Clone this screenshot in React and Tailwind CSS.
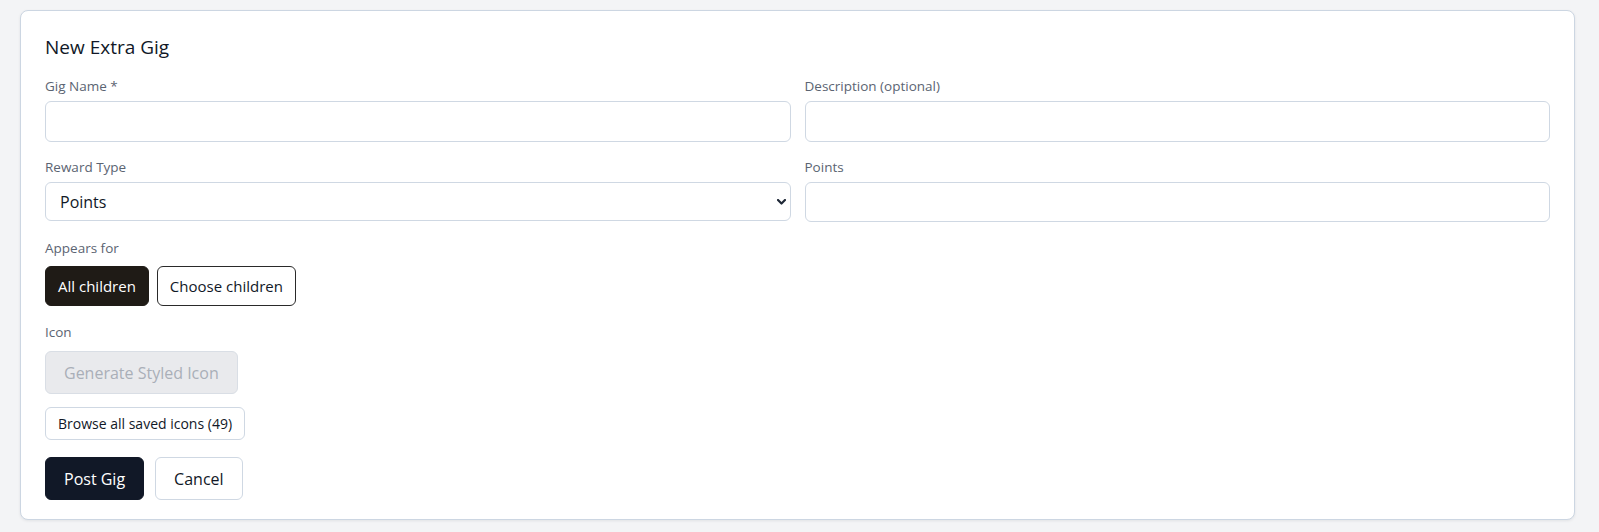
import React from "react";

function Label({ children, className = "" }) {
  return (
    <div className={`text-[13.5px] leading-[20px] text-[#5b6472] ${className}`}>{children}</div>
  );
}

function TextInput() {
  return (
    <input
      type="text"
      className="block w-full h-[41px] rounded-md border border-[#cfd8e3] bg-white px-3 text-[16px] text-[#111827] outline-none"
    />
  );
}

function Chevron() {
  return (
    <svg width="9" height="6" viewBox="0 0 9 6" className="pointer-events-none absolute right-[5px] top-1/2 -translate-y-1/2">
      <path d="M1 1l3.5 3.5L8 1" fill="none" stroke="#1f2937" strokeWidth="2.2" strokeLinecap="round" strokeLinejoin="round" />
    </svg>
  );
}

export default function App() {
  return (
    <div className="min-h-[532px] bg-[#f3f4f6] pt-[10px] pl-5 pr-6 pb-3 font-['Open_Sans',sans-serif]">
      <div className="rounded-lg border border-[#ccd6e2] bg-white px-6 pt-[22px] pb-[19px] shadow-[0_1px_3px_rgba(15,23,42,0.08)]">
        <h2 className="text-[19px] leading-[28px] text-[#111827]">New Extra Gig</h2>

        <div className="mt-[15px] grid grid-cols-2 gap-x-[14px]">
          <div>
            <Label className="mb-[5px]">Gig Name *</Label>
            <TextInput />
          </div>
          <div>
            <Label className="mb-[5px]">Description (optional)</Label>
            <TextInput />
          </div>

          <div className="mt-[15px]">
            <Label className="mb-[5px]">Reward Type</Label>
            <div className="relative">
              <select className="block w-full h-[39px] appearance-none rounded-md border border-[#cfd8e3] bg-white pl-[14px] pr-8 text-[16px] text-[#111827] outline-none">
                <option>Points</option>
                <option>Money</option>
              </select>
              <Chevron />
            </div>
          </div>
          <div className="mt-[15px]">
            <Label className="mb-[5px]">Points</Label>
            <input
              type="text"
              className="block w-full h-[40px] rounded-md border border-[#cfd8e3] bg-white px-3 text-[16px] text-[#111827] outline-none"
            />
          </div>
        </div>

        <Label className="mt-[16px] mb-[8px]">Appears for</Label>
        <div className="flex gap-2">
          <button className="h-[40px] rounded-md border border-[#1f1b16] bg-[#1f1b16] px-3 text-[15px] text-white">
            All children
          </button>
          <button className="h-[40px] rounded-md border border-[#2a2a2a] bg-white px-3 text-[15px] text-[#111827]">
            Choose children
          </button>
        </div>

        <Label className="mt-[16px] mb-[9px]">Icon</Label>
        <div>
          <button
            disabled
            className="h-[43px] rounded-md border border-[#d9dee5] bg-[#e9eaed] px-[18px] text-[16px] text-[#a9afb8]"
          >
            Generate Styled Icon
          </button>
        </div>
        <div className="mt-[13px]">
          <button className="h-[33px] rounded-md border border-[#cfd8e3] bg-white px-3 text-[14px] text-[#111827]">
            Browse all saved icons (49)
          </button>
        </div>

        <div className="mt-[17px] flex gap-[11px]">
          <button className="h-[43px] rounded-md border border-[#111827] bg-[#111827] px-[18px] text-[16px] text-white">
            Post Gig
          </button>
          <button className="h-[43px] rounded-md border border-[#cfd8e3] bg-white px-[18px] text-[16px] text-[#111827]">
            Cancel
          </button>
        </div>
      </div>
    </div>
  );
}
